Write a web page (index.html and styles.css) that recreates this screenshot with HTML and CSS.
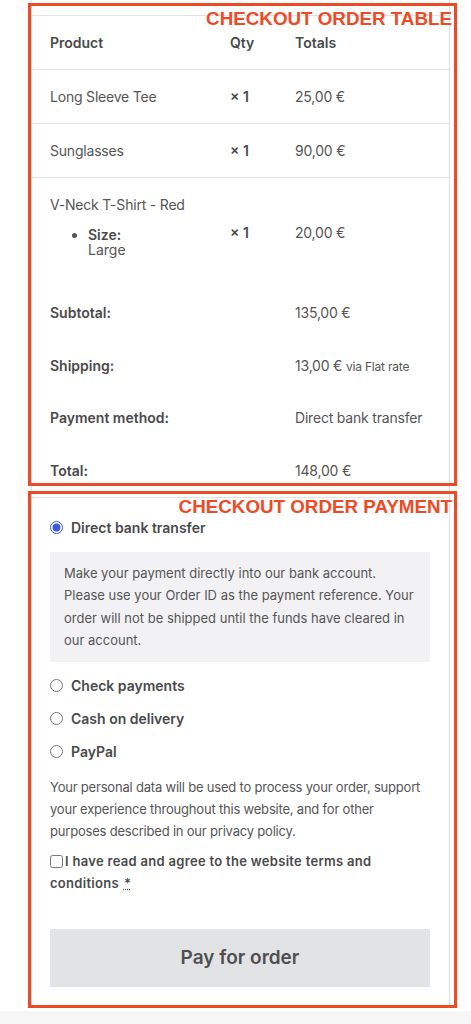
FILE: index.html
```html
<!DOCTYPE html>
<html lang="en">
<head>
    <meta charset="UTF-8">
    <meta name="viewport" content="width=device-width, initial-scale=1.0">
    <title>Pay for order</title>
    <link rel="stylesheet" href="styles.css">
</head>
<body>

<div class="page">
    <div class="panel">
        <table class="order-table">
            <colgroup>
                <col class="col-product">
                <col class="col-qty">
                <col class="col-total">
            </colgroup>
            <thead>
                <tr>
                    <th>Product</th>
                    <th>Qty</th>
                    <th>Totals</th>
                </tr>
            </thead>
            <tbody>
                <tr>
                    <td>Long Sleeve Tee</td>
                    <td class="qty">&times;&nbsp;1</td>
                    <td>25,00&nbsp;&euro;</td>
                </tr>
                <tr>
                    <td>Sunglasses</td>
                    <td class="qty">&times;&nbsp;1</td>
                    <td>90,00&nbsp;&euro;</td>
                </tr>
                <tr class="last">
                    <td>
                        V-Neck T-Shirt - Red
                        <ul class="item-meta">
                            <li><strong>Size:</strong><br>Large</li>
                        </ul>
                    </td>
                    <td class="qty">&times;&nbsp;1</td>
                    <td>20,00&nbsp;&euro;</td>
                </tr>
            </tbody>
            <tfoot>
                <tr>
                    <th colspan="2">Subtotal:</th>
                    <td>135,00&nbsp;&euro;</td>
                </tr>
                <tr>
                    <th colspan="2">Shipping:</th>
                    <td>13,00&nbsp;&euro; <small>via Flat rate</small></td>
                </tr>
                <tr>
                    <th colspan="2">Payment method:</th>
                    <td>Direct bank transfer</td>
                </tr>
                <tr>
                    <th colspan="2">Total:</th>
                    <td>148,00&nbsp;&euro;</td>
                </tr>
            </tfoot>
        </table>

        <div class="payment">
            <ul class="methods">
                <li>
                    <label><input type="radio" name="method" checked> Direct bank transfer</label>
                    <div class="method-box">
                        Make your payment directly into our bank account. Please use your Order ID as the payment reference. Your order will not be shipped until the funds have cleared in our account.
                    </div>
                </li>
                <li><label><input type="radio" name="method"> Check payments</label></li>
                <li><label><input type="radio" name="method"> Cash on delivery</label></li>
                <li><label><input type="radio" name="method"> PayPal</label></li>
            </ul>

            <p class="privacy">Your personal data will be used to process your order, support your experience throughout this website, and for other purposes described in our privacy policy.</p>

            <p class="terms">
                <label><input type="checkbox">I have read and agree to the website terms and conditions</label><abbr title="required">*</abbr>
            </p>

            <button type="button" class="pay-button">Pay for order</button>
        </div>
    </div>

    <div class="annot annot-table"><span>CHECKOUT ORDER TABLE</span></div>
    <div class="annot annot-payment"><span>CHECKOUT ORDER PAYMENT</span></div>
</div>

<div class="page-foot"></div>

</body>
</html>
```

FILE: styles.css
```css
body {
    font-family: Inter, "Noto Sans", Arial, sans-serif;
    font-size: 14px;
    color: #555;
    background: #fff;
    margin: 0;
}
.page {
    position: relative;
    padding: 0 21px 0 31px;
}
.panel {
    border-left: 1px solid #dedede;
    border-right: 1px solid #dedede;
    padding-top: 15px;
    padding-bottom: 19px;
}
.order-table {
    width: 100%;
    border-collapse: collapse;
    table-layout: fixed;
    border-top: 1px solid #e2e2e2;
}
.col-product {
    width: 180px;
}
.col-qty {
    width: 65px;
}
.order-table th,
.order-table td {
    text-align: left;
    line-height: 18px;
    padding: 18px 0 17px 18px;
    vertical-align: middle;
}
.order-table tfoot th,
.order-table tfoot td {
    padding: 17.5px 0 17px 18px;
}
.order-table td {
    letter-spacing: -0.2px;
}
.order-table th {
    font-weight: 600;
    color: #4a4a4a;
}
.order-table thead tr,
.order-table tbody tr {
    border-bottom: 1px solid #e2e2e2;
}
.order-table tbody tr.last {
    border-bottom: 0;
}
.order-table td.qty {
    font-weight: 600;
    color: #4a4a4a;
    letter-spacing: 0;
}
.order-table small {
    font-size: 12px;
    line-height: 1;
}
.item-meta {
    margin: 12.5px 0 13px 0;
    padding-left: 38px;
    line-height: 15px;
    letter-spacing: 0;
}
.item-meta strong {
    font-weight: 600;
    color: #4a4a4a;
}
.payment {
    border-top: 1px solid #e2e2e2;
    padding: 21px 19px 0 18px;
}
.methods {
    list-style: none;
    margin: 0;
    padding: 0;
}
.methods li {
    margin-bottom: 15px;
}
.methods label {
    display: flex;
    align-items: center;
    line-height: 18px;
    font-weight: 600;
    color: #4a4a4a;
}
.methods input {
    width: 13px;
    height: 13px;
    margin: 0 8px 0 0;
    accent-color: #3858e9;
}
.method-box {
    margin-top: 15px;
    background: #f2f2f4;
    padding: 10px 14px;
    font-size: 13px;
    line-height: 22.5px;
}
.privacy {
    font-size: 13px;
    line-height: 22px;
    letter-spacing: -0.2px;
    margin: 0 0 8px 0;
}
.terms {
    font-size: 13px;
    line-height: 22px;
    font-weight: 600;
    letter-spacing: 0.3px;
    color: #4a4a4a;
    margin: 0;
}
.terms input {
    width: 13px;
    height: 13px;
    margin: 0 2px 0 0;
    vertical-align: -2px;
}
.terms abbr {
    margin-left: 5px;
    letter-spacing: 0;
    text-decoration: underline dotted;
}
.pay-button {
    display: block;
    width: 100%;
    height: 58px;
    margin-top: 35px;
    border: 0;
    background: #e2e3e5;
    font-family: inherit;
    font-size: 19px;
    font-weight: 600;
    color: #4f4f4f;
}
.annot {
    position: absolute;
    left: 28px;
    width: 429px;
    box-sizing: border-box;
    border: 3px solid #ef4a26;
}
.annot span {
    position: absolute;
    right: 2px;
    top: 2px;
    font-family: "Liberation Sans", Arial, sans-serif;
    font-size: 18.8px;
    font-weight: bold;
    color: #ef4a26;
    line-height: 22px;
}
.annot-table {
    top: 3px;
    height: 483px;
}
.annot-payment {
    top: 491px;
    height: 517px;
}
.page-foot {
    height: 20px;
    margin-top: 5px;
    background: #f6f6f7;
}
```
